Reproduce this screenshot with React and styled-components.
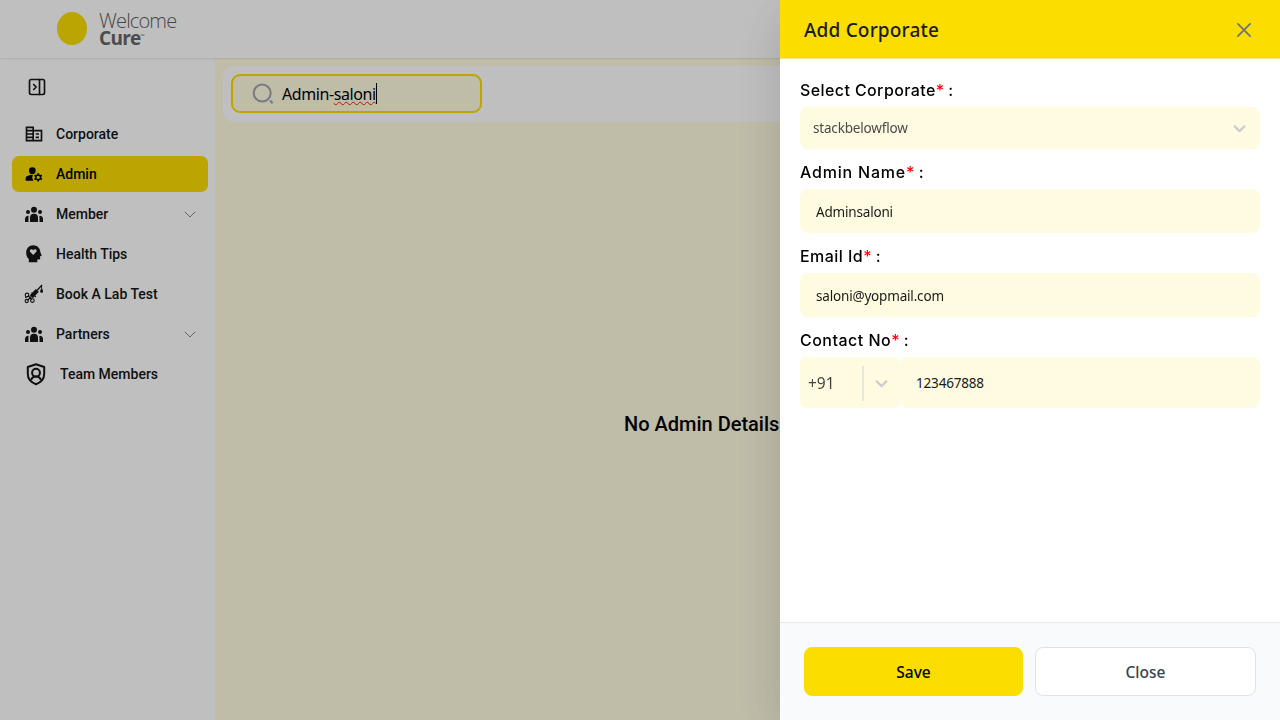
import React from "react";
import styled, { createGlobalStyle } from "styled-components";
import { PanelRightClose } from "lucide-react";
import { MdOutlineCorporateFare, MdManageAccounts } from "react-icons/md";

const ui = `"Noto Sans", "Open Sans", sans-serif`;

const GlobalStyle = createGlobalStyle`
  *, *::before, *::after { box-sizing: border-box; }
  body { margin: 0; overflow: hidden; font-family: Roboto, sans-serif; color: #000; }
  svg { display: block; flex: none; }
`;

const Page = styled.div`
  display: flex;
  flex-direction: column;
  height: 100vh;
  background: #fff;
`;

const Header = styled.header`
  display: flex;
  align-items: flex-start;
  height: 58px;
  flex: none;
  padding: 12px 0 0 57px;
  gap: 12px;
  box-shadow: 0 1px 2px rgba(0, 0, 0, 0.1);
  z-index: 1;
`;

const LogoMark = styled.div`
  width: 30px;
  height: 33px;
  border-radius: 50%;
  background: #f9dc05;
`;

const LogoText = styled.div`
  display: flex;
  flex-direction: column;
  font-family: "Open Sans", sans-serif;
`;

const LogoWord = styled.span`
  font-size: ${(p) => (p.$bold ? "19px" : "20px")};
  font-weight: ${(p) => (p.$bold ? 700 : 300)};
  line-height: ${(p) => (p.$bold ? "17px" : "18px")};
  letter-spacing: ${(p) => p.$ls};
  color: ${(p) => (p.$bold ? "#666668" : "#5e5e60")};
`;

const Trade = styled.sup`
  font-size: 5px;
  font-weight: 400;
  line-height: 0;
  vertical-align: 7px;
`;

const Body = styled.div`
  display: flex;
  flex: 1;
`;

const Sidebar = styled.aside`
  width: 215px;
  flex: none;
  padding: 19px 7px 0 12px;
`;

const Toggle = styled.div`
  padding: 0 0 0 15px;
  height: 39px;
`;

const Nav = styled.nav`
  display: flex;
  flex-direction: column;
  gap: 4px;
`;

const NavItem = styled.div`
  display: flex;
  align-items: center;
  height: 36px;
  padding: 0 12px;
  border-radius: 7px;
  font-size: 14px;
  font-weight: 500;
  color: ${(p) => (p.$active ? "#000" : "#161616")};
  background: ${(p) => (p.$active ? "#fbdd00" : "transparent")};
`;

const NavIcon = styled.span`
  display: flex;
  justify-content: center;
  width: ${(p) => (p.$wide ? "24px" : "20px")};
  margin-right: 12px;
`;

const NavLabel = styled.span`
  flex: 1;
`;

const Main = styled.main`
  flex: 1;
  display: flex;
  flex-direction: column;
  padding: 8px;
  background: #fffbe1;
`;

const Toolbar = styled.div`
  height: 56px;
  padding: 8px;
  border-radius: 10px;
  background: #fff;
`;

const Search = styled.div`
  display: flex;
  align-items: center;
  width: 251px;
  height: 39px;
  padding: 0 0 0 19px;
  gap: 8px;
  border: 2px solid #fbdd00;
  border-radius: 9px;
  background: #fffbe1;
`;

const Query = styled.span`
  display: flex;
  font-family: ${ui};
  font-size: 16px;
  line-height: 22px;
  letter-spacing: -0.42px;
`;

const Misspelt = styled.span`
  text-decoration: underline wavy #e02020 1px;
  text-decoration-skip-ink: none;
  text-underline-offset: 1px;
`;

const Caret = styled.span`
  width: 1px;
  height: 21px;
  background: #000;
`;

const Empty = styled.div`
  margin: 290px 0 0 401px;
  font-size: 20px;
  font-weight: 500;
  line-height: 24px;
`;

const Overlay = styled.div`
  position: fixed;
  inset: 0;
  z-index: 2;
  background: rgba(0, 0, 0, 0.25);
`;

const Drawer = styled.section`
  position: fixed;
  top: 0;
  right: 0;
  bottom: 0;
  z-index: 3;
  display: flex;
  flex-direction: column;
  width: 500px;
  background: #fff;
  box-shadow: 0 16px 48px rgba(0, 0, 0, 0.15);
`;

const DrawerHead = styled.div`
  display: flex;
  justify-content: space-between;
  align-items: center;
  height: 59px;
  padding: 1px 29px 0 24px;
  background: #fbdd00;
  border-bottom: 1px solid #f0e68c;
`;

const DrawerTitle = styled.h2`
  margin: 0;
  padding-top: 1px;
  font-family: ${ui};
  font-size: 19px;
  font-weight: 500;
  line-height: 28px;
  letter-spacing: 0.17px;
  color: #1b1b1b;
`;

const Form = styled.div`
  flex: 1;
  display: flex;
  flex-direction: column;
  padding: 19px 20px 0;
`;

const Label = styled.label`
  height: 24px;
  margin-bottom: 5px;
  font-family: Inter, sans-serif;
  font-size: 16px;
  font-weight: 500;
  line-height: 24px;
  white-space: pre;
`;

const LabelText = styled.span`
  letter-spacing: ${(p) => p.$ls};
`;

const Star = styled.span`
  color: #f00;
`;

const Field = styled.div`
  display: flex;
  align-items: center;
  justify-content: ${(p) => (p.$select ? "space-between" : "flex-start")};
  flex: ${(p) => (p.$grow ? 1 : "none")};
  height: ${(p) => p.$h}px;
  margin-bottom: ${(p) => (p.$grow ? 0 : 11)}px;
  padding: ${(p) => (p.$select ? "0 14px 0 13px" : "1px 16px 0")};
  border-radius: 8px;
  background: #fffbe1;
  font-family: ${ui};
  font-size: 13.5px;
  letter-spacing: -0.18px;
  color: ${(p) => (p.$select ? "#4a4a4a" : "#1a1a1a")};
`;

const Phone = styled.div`
  display: flex;
`;

const Code = styled.div`
  display: flex;
  align-items: center;
  width: 100px;
  height: 51px;
  padding: 1px 0 0 8px;
  border-radius: 6px;
  background: #fffbe1;
  font-family: ${ui};
  font-size: 15.5px;
  color: #444;
`;

const CodeText = styled.span`
  width: 54px;
`;

const Divider = styled.span`
  width: 2px;
  height: 35px;
  margin-right: 11px;
  background: #e9e7dd;
`;

const DrawerFoot = styled.div`
  display: flex;
  gap: 12px;
  height: 98px;
  padding: 24px 24px 0;
  background: #f9fafc;
  border-top: 1px solid #e5e7eb;
`;

const Button = styled.button`
  flex: ${(p) => (p.$primary ? "0 0 219px" : 1)};
  height: 49px;
  padding: 1px 0 0;
  border: 1px solid ${(p) => (p.$primary ? "#fbdd00" : "#dfe2e6")};
  border-radius: 8px;
  background: ${(p) => (p.$primary ? "#fbdd00" : "#fff")};
  color: ${(p) => (p.$primary ? "#000" : "#374151")};
  font-family: ${ui};
  font-size: 15.5px;
  font-weight: 500;
`;

const PeopleIcon = () => (
  <svg width="20" height="20" viewBox="0 0 20 20" fill="#161616">
    <circle cx="10" cy="5.7" r="3" />
    <circle cx="4" cy="8" r="2" />
    <circle cx="16" cy="8" r="2" />
    <path d="M6 18v-4.200a4 4 0 0 1 8 0V18Z" />
    <path d="M1 18v-3.200a3 3 0 0 1 3.700-2.900A6 6 0 0 0 4.500 14v4Z" />
    <path d="M19 18v-3.200a3 3 0 0 0-3.700-2.900 6 6 0 0 1 .2 2.100v4Z" />
  </svg>
);

const HeadHeartIcon = () => (
  <svg width="20" height="20" viewBox="0 0 20 20">
    <path
      fill="#161616"
      fillRule="evenodd"
      d="M9.200 1.300c4 0 7 2.900 7.100 6.600l1.300 3.300c.1.400-.1.700-.5.700h-.9v2.200c0 1-.6 1.500-1.500 1.500h-1.400v2.700H4.800v-3.300C3 13.600 2.200 11.300 2.200 8.500c0-4 3-7.200 7-7.200ZM9.200 11l2.900-2.900c1.700-1.900-1.300-4-2.900-1.900-1.600-2.100-4.600 0-2.900 1.900Z"
    />
  </svg>
);

const SyringeIcon = () => (
  <svg width="20" height="20" viewBox="0 0 20 20" fill="none" stroke="#161616">
    <path d="M7.300 12.700 13.300 6.400" strokeWidth="4.200" />
    <path d="M7.500 8.600 11.800 13" strokeWidth="1.100" />
    <path d="m13 6.500 5-5.500" strokeWidth="1.300" />
    <path d="M17.600 1v5" strokeWidth=".9" />
    <path d="M17.600 4.500c-.9 1.200-1.500 2-1.500 2.800a1.500 1.500 0 0 0 3 0c0-.8-.6-1.600-1.500-2.800Z" fill="#161616" stroke="none" />
    <path d="M7.500 12.500 3.500 16.300M4 11.500l4 4M1 13.500l3-1" strokeWidth="1.200" />
    <circle cx="3" cy="10.900" r="1.800" strokeWidth="1.100" />
    <circle cx="8.400" cy="16.600" r="1.800" strokeWidth="1.100" />
    <circle cx="2.700" cy="17" r="1.600" strokeWidth="1.100" />
  </svg>
);

const ShieldUserIcon = () => (
  <svg width="24" height="24" viewBox="0 0 24 24" fill="none" stroke="#161616" strokeWidth="2" strokeLinejoin="round">
    <path d="M12 2.200 20.200 5v7c0 4.800-3.500 8.400-8.200 10.200C7.300 20.400 3.800 16.800 3.800 12V5L12 2.200Z" />
    <circle cx="12" cy="10.700" r="3.900" />
    <path d="M7 18.300c.7-2.300 2.600-3.700 5-3.700s4.300 1.400 5 3.700" />
  </svg>
);

const ThinChevron = () => (
  <svg width="12" height="7" viewBox="0 0 12 7" fill="none" stroke="#888" strokeWidth="1">
    <path d="m.8.8 5.200 5.200L11.200.8" />
  </svg>
);

const SelectChevron = () => (
  <svg width="13" height="9" viewBox="0 0 13 9" fill="none" stroke="#ccc" strokeWidth="2.200" strokeLinecap="round" strokeLinejoin="round">
    <path d="m1.700 2.400 4.800 4.700 4.800-4.700" />
  </svg>
);

const SearchIcon = () => (
  <svg width="22" height="22" viewBox="0 0 22 22" fill="none" stroke="#9ca3af" strokeWidth="2">
    <circle cx="10.200" cy="10" r="8.500" />
    <path d="m18 17.500 2.700 2.700" strokeWidth="2.200" />
  </svg>
);

const CloseIcon = () => (
  <svg width="14" height="14" viewBox="0 0 14 14" fill="none" stroke="#6b7280" strokeWidth="1.700" strokeLinecap="round">
    <path d="m.9.900 12.200 12.200M13.100.9.900 13.100" />
  </svg>
);

const items = [
  { label: "Corporate", icon: <MdOutlineCorporateFare size={20} /> },
  { label: "Admin", icon: <MdManageAccounts size={20} />, active: true },
  { label: "Member", icon: <PeopleIcon />, expandable: true },
  { label: "Health Tips", icon: <HeadHeartIcon /> },
  { label: "Book A Lab Test", icon: <SyringeIcon /> },
  { label: "Partners", icon: <PeopleIcon />, expandable: true },
  { label: "Team Members", icon: <ShieldUserIcon />, wide: true },
];

const RequiredLabel = ({ children, ls }) => (
  <Label>
    <LabelText $ls={ls}>{children}</LabelText>
    <Star>*</Star> :
  </Label>
);

export default function App() {
  return (
    <>
      <GlobalStyle />
      <Page>
        <Header>
          <LogoMark />
          <LogoText>
            <LogoWord $ls="-0.85px">Welcome</LogoWord>
            <LogoWord $bold $ls="-0.7px">
              Cure<Trade>™</Trade>
            </LogoWord>
          </LogoText>
        </Header>
        <Body>
          <Sidebar>
            <Toggle>
              <PanelRightClose size={20} color="#161616" />
            </Toggle>
            <Nav>
              {items.map((item) => (
                <NavItem key={item.label} $active={item.active}>
                  <NavIcon $wide={item.wide}>{item.icon}</NavIcon>
                  <NavLabel>{item.label}</NavLabel>
                  {item.expandable && <ThinChevron />}
                </NavItem>
              ))}
            </Nav>
          </Sidebar>
          <Main>
            <Toolbar>
              <Search>
                <SearchIcon />
                <Query>
                  Admin-<Misspelt>saloni</Misspelt>
                  <Caret />
                </Query>
              </Search>
            </Toolbar>
            <Empty>No Admin Details</Empty>
          </Main>
        </Body>
      </Page>
      <Overlay />
      <Drawer>
        <DrawerHead>
          <DrawerTitle>Add Corporate</DrawerTitle>
          <CloseIcon />
        </DrawerHead>
        <Form>
          <RequiredLabel ls="0.4px">Select Corporate</RequiredLabel>
          <Field $select $h={42}>
            stackbelowflow
            <SelectChevron />
          </Field>
          <RequiredLabel ls="0.8px">Admin Name</RequiredLabel>
          <Field $h={44}>Adminsaloni</Field>
          <RequiredLabel ls="0.45px">Email Id</RequiredLabel>
          <Field $h={44}>saloni@yopmail.com</Field>
          <RequiredLabel ls="0.48px">Contact No</RequiredLabel>
          <Phone>
            <Code>
              <CodeText>+91</CodeText>
              <Divider />
              <SelectChevron />
            </Code>
            <Field $h={51} $grow>123467888</Field>
          </Phone>
        </Form>
        <DrawerFoot>
          <Button $primary>Save</Button>
          <Button>Close</Button>
        </DrawerFoot>
      </Drawer>
    </>
  );
}
